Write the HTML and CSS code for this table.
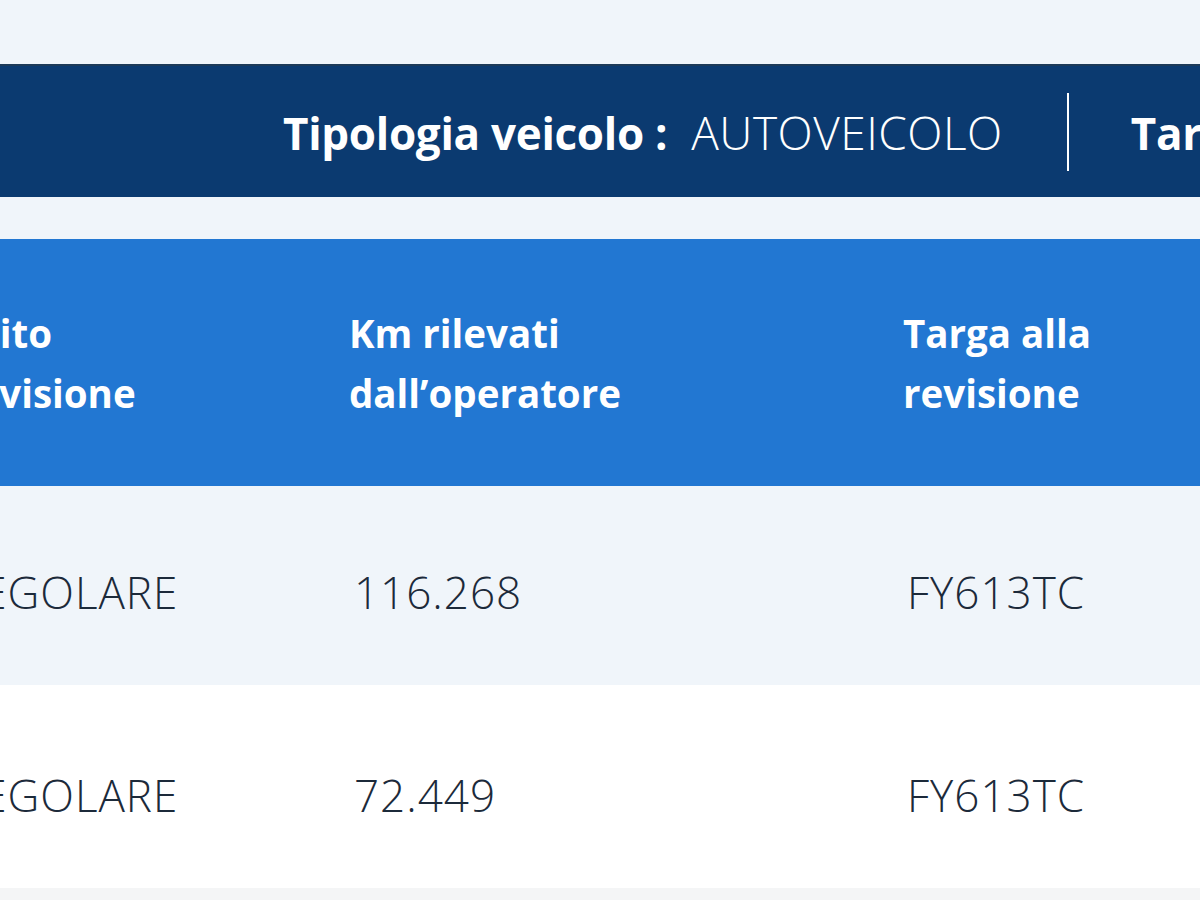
FILE: index.html
```html
<!DOCTYPE html>
<html lang="it">
<head>
<meta charset="utf-8">
<title>Revisioni veicolo</title>
<link rel="stylesheet" href="styles.css">
</head>
<body>
<div class="page">
  <div class="info-bar">
    <div class="info-item">
      <span class="info-label">Tipologia veicolo :</span>
      <span class="info-value">AUTOVEICOLO</span>
    </div>
    <div class="info-sep"></div>
    <div class="info-item">
      <span class="info-label">Targa :</span>
      <span class="info-value">FY613TC</span>
    </div>
  </div>

  <div class="table-wrap">
    <table class="rev-table">
      <thead>
        <tr>
          <th class="c1">Esito<br>revisione</th>
          <th class="c2">Km rilevati<br>dall’operatore</th>
          <th class="c3">Targa alla<br>revisione</th>
        </tr>
      </thead>
      <tbody>
        <tr class="odd">
          <td class="c1">REGOLARE</td>
          <td class="c2">116.268</td>
          <td class="c3">FY613TC</td>
        </tr>
        <tr class="even">
          <td class="c1">REGOLARE</td>
          <td class="c2">72.449</td>
          <td class="c3">FY613TC</td>
        </tr>
      </tbody>
    </table>
  </div>
</div>
</body>
</html>
```

FILE: styles.css
```css
html, body {
  margin: 0;
  padding: 0;
}
body {
  background: #f0f5fa;
  font-family: "Open Sans", "Noto Sans", sans-serif;
  font-stretch: normal;
  overflow: hidden;
  width: 1200px;
  height: 900px;
}
.page {
  padding-top: 64px;
  width: 1200px;
  overflow: hidden;
}
.info-bar {
  display: flex;
  align-items: center;
  height: 131px;
  background: #0b3a70;
  border-top: 2px solid #1d3a58;
  padding-left: 283px;
  white-space: nowrap;
  color: #ffffff;
}
.info-item {
  display: flex;
  align-items: baseline;
  gap: 24px;
  font-size: 46px;
}
.info-label {
  font-weight: 700;
  font-size: 44px;
  letter-spacing: -0.3px;
}
.info-value {
  font-weight: 300;
  letter-spacing: 0.5px;
}
.info-sep {
  width: 2px;
  height: 78px;
  background: #ffffff;
  margin: 0 62px 0 64px;
  flex: none;
}
.table-wrap {
  margin-top: 42px;
  margin-left: -45px;
}
.rev-table {
  border-collapse: collapse;
  table-layout: fixed;
  width: 1300px;
}
.rev-table th,
.rev-table td {
  text-align: left;
  vertical-align: middle;
  padding: 0;
  white-space: nowrap;
}
.rev-table th {
  background: #2277d2;
  color: #ffffff;
  font-weight: 700;
  font-size: 38.5px;
  line-height: 60px;
  height: 247px;
}
.rev-table td {
  color: #1c2a3a;
  font-weight: 300;
  font-size: 44px;
  letter-spacing: 1px;
}
tr.odd td { height: 187px; padding-top: 12px; background: #f0f5fa; }
tr.even td { height: 187px; padding-top: 16px; background: #ffffff; border-bottom: 14px solid #f4f5f6; }
.rev-table th.c1 { width: 390px; padding-left: 4px; }
.rev-table th.c2 { width: 554px; }
.rev-table th.c3 { width: 352px; }
.rev-table td.c2 { padding-left: 5px; }
.rev-table td.c3 { padding-left: 4px; }
```
